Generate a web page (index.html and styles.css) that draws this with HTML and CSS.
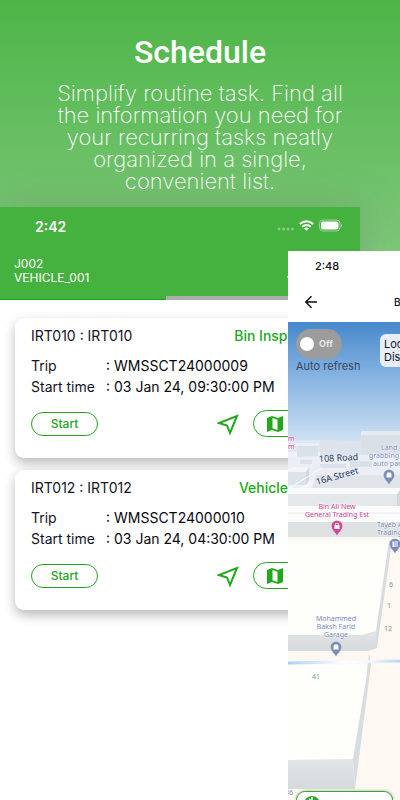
FILE: index.html
```html
<!DOCTYPE html>
<html lang="en">
<head>
  <meta charset="UTF-8" />
  <meta name="viewport" content="width=device-width, initial-scale=1" />
  <title>Schedule</title>
  <link rel="stylesheet" href="styles.css">
</head>
<body>
  <!-- shared icons -->
  <svg class="sprite" aria-hidden="true">
    <symbol id="i-nav" viewBox="0 0 22 22">
      <path d="M20 3 L13 20 L10 12.500 L2 10 Z" fill="none" stroke="currentColor" stroke-width="2" />
    </symbol>
    <symbol id="i-map" viewBox="0 0 16 16">
      <path fill-rule="evenodd" d="M0 2 L5 0 L11 2 L16 0 V14 L11 16 L5 14 L0 16 Z M5.500 2 V12.200 L10.500 13.900 V3.700 Z" fill="currentColor" />
    </symbol>
  </svg>

  <header class="intro">
    <h1>Schedule</h1>
    <p>Simplify routine task. Find all<br>the information you need for<br>your recurring tasks neatly<br>organized in a single,<br>convenient list.</p>
  </header>

  <main class="device device-back">
    <div class="topbar">
      <div class="status">
        <span class="time">2:42</span>
        <svg width="66" height="14" viewBox="0 0 66 14">
          <g fill="#fff" fill-opacity=".35">
            <circle cx="2" cy="10" r="1.500" /><circle cx="6.500" cy="10" r="1.500" /><circle cx="11" cy="10" r="1.500" /><circle cx="15.500" cy="10" r="1.500" />
          </g>
          <g fill="none" stroke="#fff" stroke-width="2">
            <path d="M22.800 5 Q29.500 -.6 36.200 5" /><path d="M25.200 7.800 Q29.500 4.200 33.800 7.800" />
          </g>
          <path d="M27 9.300 Q29.500 7.600 32 9.300 L29.500 11.800 Z" fill="#fff" />
          <rect x="42.500" y="1" width="20.500" height="11" rx="3.500" fill="none" stroke="#fff" stroke-opacity=".45" />
          <rect x="44" y="2.500" width="17.500" height="8" rx="2" fill="#fff" />
          <path d="M64 4.500 Q66 6.500 64 8.500 Z" fill="#fff" fill-opacity=".5" />
        </svg>
      </div>
      <div class="vehicle">
        <p>J002<br>VEHICLE_001</p>
        <svg width="16" height="16" viewBox="0 0 16 16"><path d="M0 8 L6 2 V6 H15 V10 H6 V14 Z" fill="#fff" /></svg>
      </div>
      <div class="tabs"><span class="active"></span><span></span></div>
    </div>

    <section class="cards">
      <article class="card">
        <div class="card-head"><h2>IRT010 : IRT010</h2><span class="kind">Bin Inspection</span></div>
        <dl>
          <dt>Trip</dt><dd>: WMSSCT24000009</dd>
          <dt>Start time</dt><dd>: 03 Jan 24, 09:30:00 PM</dd>
        </dl>
        <div class="actions">
          <button class="start">Start</button>
          <button class="nav" aria-label="Navigate"><svg width="22" height="22"><use href="#i-nav" /></svg></button>
          <button class="map-btn" aria-label="Map"><svg width="16" height="16"><use href="#i-map" /></svg></button>
        </div>
      </article>
      <article class="card">
        <div class="card-head"><h2>IRT012 : IRT012</h2><span class="kind">Vehicle Wash</span></div>
        <dl>
          <dt>Trip</dt><dd>: WMSSCT24000010</dd>
          <dt>Start time</dt><dd>: 03 Jan 24, 04:30:00 PM</dd>
        </dl>
        <div class="actions">
          <button class="start">Start</button>
          <button class="nav" aria-label="Navigate"><svg width="22" height="22"><use href="#i-nav" /></svg></button>
          <button class="map-btn" aria-label="Map"><svg width="16" height="16"><use href="#i-map" /></svg></button>
        </div>
      </article>
    </section>
  </main>

  <!-- second phone, lies over the first one -->
  <aside class="device-front">
    <div class="front-head">
      <span class="time">2:48</span>
      <div class="front-title">
        <button class="back" aria-label="Back">
          <svg width="14" height="14" viewBox="0 0 14 14"><path d="M13 7 H2 M7.500 1.300 L1.800 7 L7.500 12.700" fill="none" stroke="#111" stroke-width="1.500" /></svg>
        </button>
        <h2>Bins</h2>
      </div>
    </div>
    <div class="map">
      <svg class="scene" viewBox="0 0 112 478" preserveAspectRatio="xMinYMin slice">
        <defs>
          <linearGradient id="sky" x1="0" y1="0" x2="0" y2="1">
            <stop offset="0" stop-color="#4588cb" /><stop offset=".35" stop-color="#7caddf" /><stop offset="1" stop-color="#dbe8f6" />
          </linearGradient>
          <linearGradient id="wall" x1="0" y1="0" x2="0" y2="1">
            <stop offset="0" stop-color="#e3e5e6" /><stop offset="1" stop-color="#d5dadd" />
          </linearGradient>
          <linearGradient id="road" gradientUnits="userSpaceOnUse" x1="0" y1="340" x2="112" y2="340">
            <stop offset="0" stop-color="#a5d2fa" /><stop offset=".5" stop-color="#fff" /><stop offset=".75" stop-color="#f2f7fd" /><stop offset="1" stop-color="#b5d5f8" />
          </linearGradient>
          <symbol id="pin" viewBox="0 0 12 16">
            <path d="M6 15.500 C4.500 12.500 .5 10 .5 6 A5.500 5.500 0 0 1 11.500 6 C11.500 10 7.500 12.500 6 15.500 Z" fill="currentColor" stroke="#fff" stroke-opacity=".5" stroke-width=".5" />
          </symbol>
        </defs>
        <rect width="112" height="130" fill="url(#sky)" />
        <rect y="122" width="112" height="356" fill="#eef2f8" />

        <!-- far blocks -->
        <path d="M0 118 H32 V130 H0 Z" fill="#dfe7f0" />
        <path d="M32 118 L73 119 V145 H32 Z" fill="#dce3ea" />
        <path d="M73 109 H112 V138 H73 Z" fill="#d9e0e7" />
        <path d="M73 109 H112 V113 H73 Z" fill="#e6ebf0" />
        <path d="M7 121 H31 V124 H7 Z" fill="#eaf0f5" />
        <path d="M9 124 H30 V138 H9 Z" fill="#d9e1e9" />
        <path d="M0 135 L112 132 V158 H0 Z" fill="#ebeff5" />
        <path d="M12 138 H24 V142 H12 Z M32 142 H58 V146 H32 Z M62 139 H84 V145 H62 Z" fill="#dbe1e8" />
        <path d="M0 150 H18 V163 H0 Z" fill="#dde3ea" />
        <path d="M0 147 L5 145 H21 L18 150 H0 Z" fill="#f1f5f8" />
        <path d="M18 150 L21 145 V158 L18 163 Z" fill="#d0d7df" />
        <path d="M0 167 L34 146 M0 172 L44 152" stroke="#f8fafc" stroke-width="1" />
        <path d="M28 153 H112 V166 H24 Z" fill="#e1e5ea" />
        <path d="M0 166 H112 V172 H0 Z" fill="#f9faf9" />
        <path d="M0 172 H109 V184 H0 Z" fill="#e5e8ea" />
        <path d="M109 172 L112 168 V184 H109 Z" fill="#d4d8db" />
        <path d="M0 184 H112 V200 H0 Z" fill="#fbfbf9" />
        <path d="M0 190 H112 V192 H0 Z" fill="#f3f4f6" />
        <path d="M0 200 H112 V215 H0 Z" fill="#dfe2e3" />
        <path d="M0 215 H112 V220 H0 Z" fill="#fbf9f4" />

        <!-- near blocks -->
        <path d="M0 219 H112 V478 H0 Z" fill="#fdf8f1" />
        <path d="M0 219 H101 L88 309 L74 313 H0 Z" fill="#fefefb" />
        <path d="M101 219 L104 219 L89 326 L80 329 L88 309 Z" fill="#d8dcde" />
        <path d="M0 313 H74 L88 309 V326 L80 329 H0 Z" fill="url(#wall)" />
        <path d="M0 343 L80 342 L78 360 L65 438 H0 Z" fill="#fefefb" />
        <path d="M81 331 L83 342 L67 467 L65 437 L78 358 Z" fill="#d7dcdf" />
        <path d="M0 438 L65 437 L67 467 H0 Z" fill="url(#wall)" />
        <path d="M0 341 L112 339" stroke="url(#road)" stroke-width="3" />

        <g class="street">
          <text x="31" y="140" transform="rotate(-3 31 140)">108 Road</text>
          <text x="29" y="163" transform="rotate(-16 29 163)">16A Street</text>
        </g>
        <g class="poi pink">
          <text x="0" y="119">m</text><text x="0" y="127">m</text>
          <text x="49" y="187" text-anchor="middle">Bin Ali New</text>
          <text x="49" y="195" text-anchor="middle">General Trading Est</text>
          <use href="#pin" x="43" y="198" width="12" height="16" />
        </g>
        <g class="poi blue">
          <text x="93" y="128">Land</text><text x="81" y="136">grabbing</text><text x="85" y="144">auto parts</text>
          <text x="89" y="205">Tayeb Al</text><text x="89" y="213">Trading</text>
          <text x="48" y="299" text-anchor="middle">Mohammed</text>
          <text x="48" y="307" text-anchor="middle">Baksh Farid</text>
          <text x="48" y="315" text-anchor="middle">Garage</text>
          <use href="#pin" x="95" y="147" width="12" height="16" />
          <use href="#pin" x="101" y="216" width="12" height="16" />
          <use href="#pin" x="42" y="319" width="12" height="16" />
        </g>
        <g fill="#fff">
          <path d="M46.500 203 H51.500 V207 H46.500 Z" /><path d="M47.500 203 V201.500 H50.500 V203" fill="none" stroke="#fff" stroke-width=".7" />
          <path id="car" d="M98.500 152.500 L99.300 150.500 H102.700 L103.500 152.500 V155.500 H98.500 Z" />
          <use href="#car" x="-53" y="172" />
          <path d="M104.500 219.500 H106.500 V225 H104.500 Z M107 219.500 H110 V220.500 H107 Z M107 221.500 H110 V222.500 H107 Z M107 223.500 H110 V224.500 H107 Z" />
        </g>
        <g class="number">
          <text x="101" y="265">6</text><text x="99" y="286">1</text><text x="96" y="309">12</text>
          <text x="24" y="357">41</text><text x="-3" y="473">36</text>
        </g>
      </svg>

      <div class="overlay">
        <div class="controls">
          <div class="refresh">
            <label class="toggle"><input type="checkbox" id="auto" aria-label="Auto refresh"><span>Off</span></label>
            <label for="auto">Auto refresh</label>
          </div>
          <div class="info">Location<br>Distance</div>
        </div>
        <div class="sheet">
          <svg width="16" height="16" viewBox="0 0 16 16"><circle cx="8" cy="8" r="8" fill="#2ea82c" /><path d="M8 1 V5 L5 3" fill="none" stroke="#fff" stroke-width="1.500" /></svg>
        </div>
      </div>
    </div>
  </aside>
</body>
</html>
```
FILE: styles.css
```css
* {
  box-sizing: border-box;
}
body {
  margin: 0;
  min-height: 100vh;
  display: flex;
  flex-direction: column;
  position: relative;
  overflow: hidden;
  font-family: Inter, "Liberation Sans", sans-serif;
  background: linear-gradient(#4db547, #7fc87b 260px);
  color: #14141f;
}
h1, h2, p, dl, dd {
  margin: 0;
}
button {
  padding: 0;
  border: none;
  background: none;
  font-family: inherit;
  color: #21a81b;
}
svg {
  display: block;
}
.sprite {
  position: absolute;
  width: 0;
  height: 0;
}
.intro {
  height: 207px;
  padding-top: 32px;
  text-align: center;
  color: #fff;
}
.intro h1 {
  font-family: Roboto, sans-serif;
  font-size: 32px;
  line-height: 40px;
  font-weight: 500;
}
.intro p {
  margin-top: 10px;
  font-size: 22px;
  line-height: 22px;
  font-weight: 200;
}

/* back phone */
.device-back {
  flex: 1;
  width: 90%;
  background: #fff;
  box-shadow: 0 0 40px rgba(90, 90, 90, 0.25);
}
.topbar {
  background: #45b13e;
  color: #fff;
}
.status {
  display: flex;
  justify-content: space-between;
  align-items: center;
  height: 38px;
  padding: 0 17px 0 35px;
}
.status .time {
  font-size: 14px;
  font-weight: 600;
}
.vehicle {
  display: flex;
  justify-content: space-between;
  align-items: flex-end;
  height: 51px;
  padding: 0 57px 11px 14px;
  font-size: 12px;
  line-height: 14px;
}
.tabs {
  display: flex;
  height: 4px;
}
.tabs span {
  width: 54%;
  background: #acacac;
}
.tabs .active {
  width: 46%;
  background: #45b13e;
  border-bottom: 1px solid #1ba514;
}
.cards {
  display: flex;
  flex-direction: column;
  gap: 12px;
  padding: 18px 15px;
}
.card {
  padding: 8px 16px 21px;
  border-radius: 9px;
  background: #fff;
  box-shadow: 0 5px 12px rgba(0, 0, 0, 0.28);
}
.card-head {
  display: flex;
  justify-content: space-between;
  line-height: 20px;
  font-size: 14px;
}
.card h2 {
  font-size: 14px;
  font-weight: 400;
}
.kind {
  color: #21a81b;
  font-weight: 500;
}
.card dl {
  display: grid;
  grid-template-columns: 75px 1fr;
  margin: 9px 0 13px;
  font-size: 14px;
  line-height: 21px;
}
.card dd {
  color: #08080f;
}
.actions {
  display: flex;
  align-items: center;
}
.start {
  width: 67px;
  height: 24px;
  border: 1px solid #21a81b;
  border-radius: 12px;
  font-size: 12px;
  font-weight: 500;
}
.nav {
  margin-left: auto;
}
.map-btn {
  width: 76px;
  height: 27px;
  margin-left: 14px;
  padding-left: 13px;
  border: 1px solid #21a81b;
  border-radius: 14px;
}

/* front phone */
.device-front {
  position: absolute;
  top: 251px;
  bottom: 0;
  left: 72%;
  right: 0;
  display: flex;
  flex-direction: column;
  overflow: hidden;
  background: #fff;
}
.front-head {
  height: 71px;
  color: #111;
}
.front-head .time {
  display: block;
  padding-left: 27px;
  font-size: 11px;
  font-weight: 500;
  line-height: 30px;
}
.front-title {
  display: flex;
  align-items: center;
  gap: 76px;
  height: 41px;
  padding-left: 16px;
}
.front-title button {
  flex: none;
}
.front-title h2 {
  font-size: 10px;
  font-weight: 500;
}
.map {
  flex: 1;
  min-height: 0;
  display: grid;
  grid-template: minmax(0, 1fr) / minmax(0, 1fr);
}
.scene {
  grid-area: 1 / 1;
  width: 100%;
  height: 100%;
}
.scene text {
  font-family: "Noto Sans", sans-serif;
}
.street text {
  font-size: 9px;
  fill: #26365c;
}
.poi text {
  font-size: 7px;
  fill: currentColor;
  stroke: #fff;
  stroke-width: 1px;
  stroke-opacity: 0.6;
  paint-order: stroke;
}
.pink {
  color: #cf4597;
}
.blue {
  color: #7c8cba;
}
.number text {
  font-size: 7px;
  fill: #7a9aa5;
}
.overlay {
  grid-area: 1 / 1;
  display: flex;
  flex-direction: column;
  justify-content: space-between;
  z-index: 1;
}
.controls {
  display: flex;
  gap: 22px;
  padding: 7px 0 0 8px;
}
.refresh {
  flex: none;
  width: 62px;
  font-size: 11px;
  line-height: 14px;
  color: #3b4658;
  white-space: nowrap;
}
.toggle {
  display: flex;
  align-items: center;
  gap: 5px;
  width: 46px;
  height: 30px;
  padding-left: 4px;
  border-radius: 15px;
  background: #9c9c9c;
  color: #e8e8e8;
  font-size: 9px;
  font-weight: 700;
}
.toggle input {
  appearance: none;
  width: 14px;
  height: 14px;
  margin: 0;
  border-radius: 50%;
  background: #fff;
}
.info {
  flex: none;
  width: 90px;
  height: 33px;
  margin-top: 5px;
  padding: 4px;
  border-radius: 6px;
  background: #e6eef8;
  font-size: 11px;
  line-height: 13px;
}
.sheet {
  height: 9px;
  margin: 0 7px 0 8px;
  padding: 4px 7px 0;
  overflow: hidden;
  border: 1px solid #3aa838;
  border-bottom: none;
  border-radius: 12px 12px 0 0;
  background: #fff;
  box-shadow: 0 0 3px rgba(0, 0, 0, 0.4);
}
```
